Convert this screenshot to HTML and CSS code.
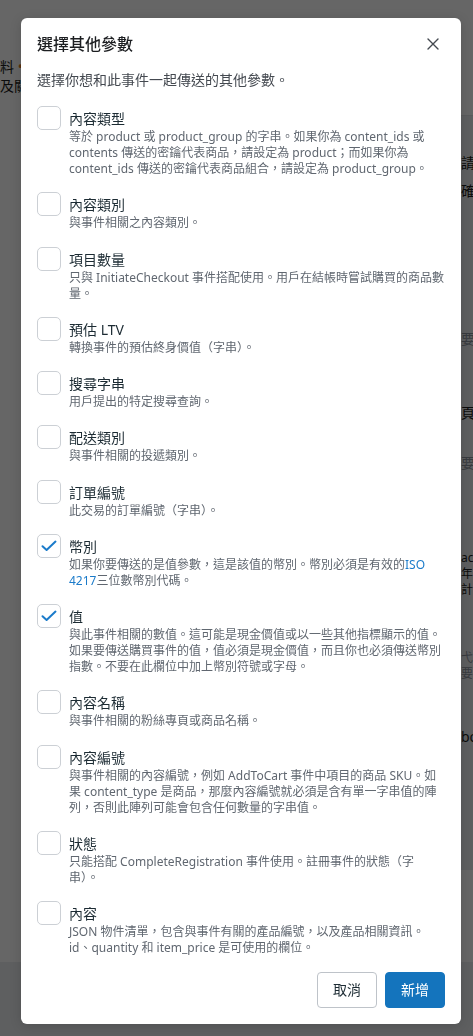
FILE: index.html
```html
<!DOCTYPE html>
<html lang="zh-Hant">
<head>
<meta charset="utf-8">
<title>選擇其他參數</title>
<link rel="stylesheet" href="styles.css">
</head>
<body>
<div class="page">
  <div class="page-main">
    <div class="bg-left">
      <div>料 <span class="bg-dot">•</span></div>
      <div>及關</div>
    </div>
    <div class="bg-right">
      <div class="side-panel">
        <div class="frag f-1">請</div>
        <div class="frag f-2">確</div>
        <div class="frag light f-3">要</div>
        <div class="frag f-4">頁</div>
        <div class="frag light f-5">要</div>
        <div class="frag tight f-6">ac</div>
        <div class="frag tight">年的</div>
        <div class="frag tight">計更</div>
        <div class="frag light tight f-7">弋</div>
        <div class="frag light tight">要</div>
        <div class="frag f-8">bo</div>
      </div>
    </div>
  </div>
  <div class="page-foot"></div>
</div>

<div class="overlay"></div>

<div class="modal" role="dialog" aria-labelledby="dlg-title">
  <div class="modal-header">
    <h2 id="dlg-title" class="modal-title">選擇其他參數</h2>
    <button class="close" aria-label="關閉">
      <svg width="12" height="12" viewBox="0 0 12 12"><path d="M1 1L11 11M11 1L1 11" stroke="#444950" stroke-width="1.4" stroke-linecap="round" fill="none"/></svg>
    </button>
  </div>
  <p class="intro">選擇你想和此事件一起傳送的其他參數。</p>

  <ul class="params">
    <li class="param">
      <span class="checkbox"></span>
      <div class="param-text">
        <div class="param-name">內容類型</div>
        <div class="param-desc">等於 product 或 product_group 的字串。如果你為 content_ids 或<br>contents 傳送的密鑰代表商品，請設定為 product；而如果你為<br>content_ids 傳送的密鑰代表商品組合，請設定為 product_group。</div>
      </div>
    </li>
    <li class="param">
      <span class="checkbox"></span>
      <div class="param-text">
        <div class="param-name">內容類別</div>
        <div class="param-desc">與事件相關之內容類別。</div>
      </div>
    </li>
    <li class="param">
      <span class="checkbox"></span>
      <div class="param-text">
        <div class="param-name">項目數量</div>
        <div class="param-desc">只與 InitiateCheckout 事件搭配使用。用戶在結帳時嘗試購買的商品數<br>量。</div>
      </div>
    </li>
    <li class="param">
      <span class="checkbox"></span>
      <div class="param-text">
        <div class="param-name">預估 LTV</div>
        <div class="param-desc">轉換事件的預估終身價值（字串）。</div>
      </div>
    </li>
    <li class="param">
      <span class="checkbox"></span>
      <div class="param-text">
        <div class="param-name">搜尋字串</div>
        <div class="param-desc">用戶提出的特定搜尋查詢。</div>
      </div>
    </li>
    <li class="param">
      <span class="checkbox"></span>
      <div class="param-text">
        <div class="param-name">配送類別</div>
        <div class="param-desc">與事件相關的投遞類別。</div>
      </div>
    </li>
    <li class="param">
      <span class="checkbox"></span>
      <div class="param-text">
        <div class="param-name">訂單編號</div>
        <div class="param-desc">此交易的訂單編號（字串）。</div>
      </div>
    </li>
    <li class="param">
      <span class="checkbox checked">
        <svg width="24" height="24" viewBox="0 0 24 24"><path d="M5.5 12.2L9.6 16L18.5 7.6" stroke="#1b7bca" stroke-width="2" stroke-linecap="round" stroke-linejoin="round" fill="none"/></svg>
      </span>
      <div class="param-text">
        <div class="param-name">幣別</div>
        <div class="param-desc">如果你要傳送的是值參數，這是該值的幣別。幣別必須是有效的<a class="link" href="#">ISO<br>4217</a>三位數幣別代碼。</div>
      </div>
    </li>
    <li class="param">
      <span class="checkbox checked">
        <svg width="24" height="24" viewBox="0 0 24 24"><path d="M5.5 12.2L9.6 16L18.5 7.6" stroke="#1b7bca" stroke-width="2" stroke-linecap="round" stroke-linejoin="round" fill="none"/></svg>
      </span>
      <div class="param-text">
        <div class="param-name">值</div>
        <div class="param-desc">與此事件相關的數值。這可能是現金價值或以一些其他指標顯示的值。<br>如果要傳送購買事件的值，值必須是現金價值，而且你也必須傳送幣別<br>指數。不要在此欄位中加上幣別符號或字母。</div>
      </div>
    </li>
    <li class="param">
      <span class="checkbox"></span>
      <div class="param-text">
        <div class="param-name">內容名稱</div>
        <div class="param-desc">與事件相關的粉絲專頁或商品名稱。</div>
      </div>
    </li>
    <li class="param">
      <span class="checkbox"></span>
      <div class="param-text">
        <div class="param-name">內容編號</div>
        <div class="param-desc">與事件相關的內容編號，例如 AddToCart 事件中項目的商品 SKU。如<br>果 content_type 是商品，那麼內容編號就必須是含有單一字串值的陣<br>列，否則此陣列可能會包含任何數量的字串值。</div>
      </div>
    </li>
    <li class="param">
      <span class="checkbox"></span>
      <div class="param-text">
        <div class="param-name">狀態</div>
        <div class="param-desc">只能搭配 CompleteRegistration 事件使用。註冊事件的狀態（字<br>串）。</div>
      </div>
    </li>
    <li class="param">
      <span class="checkbox"></span>
      <div class="param-text">
        <div class="param-name">內容</div>
        <div class="param-desc">JSON 物件清單，包含與事件有關的產品編號，以及產品相關資訊。<br>id、quantity 和 item_price 是可使用的欄位。</div>
      </div>
    </li>
  </ul>

  <div class="footer">
    <button class="btn">取消</button>
    <button class="btn btn-primary">新增</button>
  </div>
</div>
</body>
</html>
```

FILE: styles.css
```css
* { box-sizing: border-box; }

html, body {
  margin: 0;
  height: 100%;
  overflow: hidden;
}

body {
  font-family: "Noto Sans", "Noto Sans CJK TC", sans-serif;
  background: #ffffff;
  color: #1c2b33;
}

/* underlying page (dimmed by the overlay) */
.page {
  height: 1036px;
  display: flex;
  flex-direction: column;
}

.page-main {
  flex: 1;
  display: flex;
  justify-content: space-between;
}

.page-foot {
  height: 74px;
  background: #eaedf1;
}

.bg-left {
  width: 40px;
  padding-top: 57px;
  font-size: 14px;
  line-height: 19px;
  color: #1c1e21;
  white-space: nowrap;
}

.bg-dot { color: #e07b1a; }

.bg-right {
  width: 12px;
  padding-top: 115px;
}

.side-panel {
  height: 755px;
  background: #eceef0;
  border-top: 1px solid #e0e3e6;
  font-size: 14px;
  line-height: 19px;
  white-space: nowrap;
  color: #1c1e21;
  overflow: hidden;
}

.frag.light { color: #8d949e; }
.frag.tight {
  font-size: 12px;
  line-height: 16px;
}
.f-1 { margin-top: 37px; }
.f-2 { margin-top: 9px; }
.f-3 { margin-top: 129px; }
.f-4 { margin-top: 55px; }
.f-5 { margin-top: 31px; }
.f-6 { margin-top: 78px; }
.f-7 { margin-top: 52px; }
.f-8 { margin-top: 45px; }

.overlay {
  position: fixed;
  inset: 0;
  background: rgba(0, 0, 0, 0.6);
}

/* dialog */
.modal {
  position: absolute;
  top: 18px;
  left: 21px;
  width: 440px;
  background: #ffffff;
  border-radius: 6px;
  padding: 16px;
  box-shadow: 0 2px 12px rgba(0, 0, 0, 0.15);
}

.modal-header {
  display: flex;
  justify-content: space-between;
  align-items: center;
  height: 20px;
}

.modal-title {
  margin: 0;
  font-size: 16px;
  line-height: 20px;
  font-weight: 500;
  color: #1c1e21;
}

.close {
  width: 24px;
  height: 24px;
  margin: -2px 0;
  padding: 0;
  border: none;
  background: none;
  display: grid;
  place-items: center;
  cursor: pointer;
}

.close svg { display: block; }

.intro {
  margin: 16px 0;
  font-size: 14px;
  line-height: 20px;
  color: #444950;
}

.params {
  list-style: none;
  margin: 0;
  padding: 0;
  display: flex;
  flex-direction: column;
  gap: 15.25px;
}

.param {
  display: flex;
  gap: 8px;
}

.checkbox {
  flex: none;
  width: 24px;
  height: 24px;
  border: 1px solid #ccd0d5;
  border-radius: 5px;
  background: #ffffff;
  display: grid;
  place-items: center;
}

.checkbox svg {
  display: block;
  margin: -1px;
}

.param-text {
  padding-top: 3px;
  min-width: 0;
}

.param-name {
  font-size: 14px;
  line-height: 20px;
  color: #1c2b33;
}

.param-desc {
  font-size: 12px;
  line-height: 16px;
  color: #606770;
  white-space: nowrap;
}

.link {
  color: #1b7bca;
  text-decoration: none;
}

.footer {
  display: flex;
  justify-content: flex-end;
  gap: 8px;
  margin-top: 16px;
}

.btn {
  height: 36px;
  padding: 0 15px;
  font-family: inherit;
  font-size: 14px;
  line-height: 20px;
  color: #1c2b33;
  background: #ffffff;
  border: 1px solid #bec3c9;
  border-radius: 4px;
  cursor: pointer;
}

.btn-primary {
  color: #ffffff;
  background: #1474bd;
  border-color: #1474bd;
}
```
